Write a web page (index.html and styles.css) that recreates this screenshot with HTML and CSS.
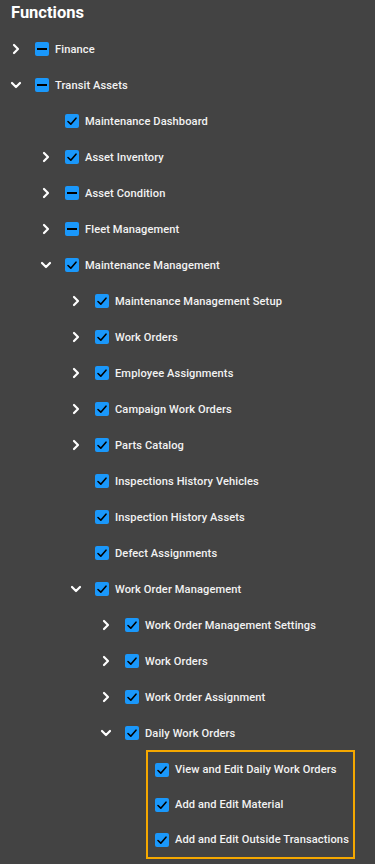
FILE: index.html
```html
<!doctype html>
<html lang="en-US">
	<head>
		<title>Functions</title>
		<meta charset="UTF-8">
		<meta name="viewport" content="width=device-width, initial-scale=1.0">
		<link rel="stylesheet" href="styles.css">
	</head>

	<body>
		<svg style="display: none;">
			<symbol id="chev-right" viewBox="0 0 12 12"><path d="M4 2 L8 6 L4 10" fill="none" stroke="#fff" stroke-width="2.2" stroke-linecap="round" stroke-linejoin="round"/></symbol>
			<symbol id="chev-down" viewBox="0 0 12 12"><path d="M2 4 L6 8 L10 4" fill="none" stroke="#fff" stroke-width="2.2" stroke-linecap="round" stroke-linejoin="round"/></symbol>
			<symbol id="tick" viewBox="0 0 14 14"><path d="M3 7.5 L5.8 10.2 L11 4.2" fill="none" stroke="#000" stroke-width="1.6" stroke-linecap="round" stroke-linejoin="round"/></symbol>
		</svg>

		<div class="panel">
			<h1>Functions</h1>

			<ul class="tree">
				<li>
					<div class="row"><svg class="toggle"><use href="#chev-right"/></svg><span class="box partial"></span><span class="label">Finance</span></div>
				</li>
				<li>
					<div class="row"><svg class="toggle"><use href="#chev-down"/></svg><span class="box partial"></span><span class="label">Transit Assets</span></div>
					<ul class="children">
						<li><div class="row"><span class="toggle"></span><span class="box"><svg><use href="#tick"/></svg></span><span class="label">Maintenance Dashboard</span></div></li>
						<li><div class="row"><svg class="toggle"><use href="#chev-right"/></svg><span class="box"><svg><use href="#tick"/></svg></span><span class="label">Asset Inventory</span></div></li>
						<li><div class="row"><svg class="toggle"><use href="#chev-right"/></svg><span class="box partial"></span><span class="label">Asset Condition</span></div></li>
						<li><div class="row"><svg class="toggle"><use href="#chev-right"/></svg><span class="box partial"></span><span class="label">Fleet Management</span></div></li>
						<li>
							<div class="row"><svg class="toggle"><use href="#chev-down"/></svg><span class="box"><svg><use href="#tick"/></svg></span><span class="label">Maintenance Management</span></div>
							<ul class="children">
								<li><div class="row"><svg class="toggle"><use href="#chev-right"/></svg><span class="box"><svg><use href="#tick"/></svg></span><span class="label">Maintenance Management Setup</span></div></li>
								<li><div class="row"><svg class="toggle"><use href="#chev-right"/></svg><span class="box"><svg><use href="#tick"/></svg></span><span class="label">Work Orders</span></div></li>
								<li><div class="row"><svg class="toggle"><use href="#chev-right"/></svg><span class="box"><svg><use href="#tick"/></svg></span><span class="label">Employee Assignments</span></div></li>
								<li><div class="row"><svg class="toggle"><use href="#chev-right"/></svg><span class="box"><svg><use href="#tick"/></svg></span><span class="label">Campaign Work Orders</span></div></li>
								<li><div class="row"><svg class="toggle"><use href="#chev-right"/></svg><span class="box"><svg><use href="#tick"/></svg></span><span class="label">Parts Catalog</span></div></li>
								<li><div class="row"><span class="toggle"></span><span class="box"><svg><use href="#tick"/></svg></span><span class="label">Inspections History Vehicles</span></div></li>
								<li><div class="row"><span class="toggle"></span><span class="box"><svg><use href="#tick"/></svg></span><span class="label">Inspection History Assets</span></div></li>
								<li><div class="row"><span class="toggle"></span><span class="box"><svg><use href="#tick"/></svg></span><span class="label">Defect Assignments</span></div></li>
								<li>
									<div class="row"><svg class="toggle"><use href="#chev-down"/></svg><span class="box"><svg><use href="#tick"/></svg></span><span class="label">Work Order Management</span></div>
									<ul class="children">
										<li><div class="row"><svg class="toggle"><use href="#chev-right"/></svg><span class="box"><svg><use href="#tick"/></svg></span><span class="label">Work Order Management Settings</span></div></li>
										<li><div class="row"><svg class="toggle"><use href="#chev-right"/></svg><span class="box"><svg><use href="#tick"/></svg></span><span class="label">Work Orders</span></div></li>
										<li><div class="row"><svg class="toggle"><use href="#chev-right"/></svg><span class="box"><svg><use href="#tick"/></svg></span><span class="label">Work Order Assignment</span></div></li>
										<li>
											<div class="row"><svg class="toggle"><use href="#chev-down"/></svg><span class="box"><svg><use href="#tick"/></svg></span><span class="label">Daily Work Orders</span></div>
											<ul class="children highlight">
												<li><div class="row"><span class="box"><svg><use href="#tick"/></svg></span><span class="label">View and Edit Daily Work Orders</span></div></li>
												<li><div class="row"><span class="box"><svg><use href="#tick"/></svg></span><span class="label">Add and Edit Material</span></div></li>
												<li><div class="row"><span class="box"><svg><use href="#tick"/></svg></span><span class="label">Add and Edit Outside Transactions</span></div></li>
											</ul>
										</li>
									</ul>
								</li>
							</ul>
						</li>
					</ul>
				</li>
			</ul>
		</div>
	</body>
</html>
```

FILE: styles.css
```css
* {
	padding: 0;
	margin: 0;
	box-sizing: border-box;
}

body {
	background: #434343;
	color: #f2f2f2;
	font-family: Roboto, "Liberation Sans", sans-serif;
	height: 864px;
	overflow: hidden;
}

.panel {
	padding-left: 10px;
}

h1 {
	font-size: 16.5px;
	font-weight: 700;
	line-height: 26px;
	margin-left: 1px;
	margin-bottom: 5px;
	color: #fff;
}

ul {
	list-style: none;
}

.children {
	padding-left: 30px;
}

.row {
	display: flex;
	align-items: center;
	height: 36px;
}

.toggle {
	width: 12px;
	height: 12px;
	margin-right: 13px;
	flex-shrink: 0;
}

.box {
	width: 14px;
	height: 14px;
	border-radius: 2px;
	background: #1a98fb;
	margin-right: 6px;
	flex-shrink: 0;
	position: relative;
	display: flex;
	align-items: center;
	justify-content: center;
}

.box svg {
	width: 14px;
	height: 14px;
}

.box.partial::after {
	content: "";
	width: 10px;
	height: 2px;
	background: #000;
}

.label {
	font-size: 11.1px;
	font-weight: 500;
	letter-spacing: 0.1px;
	white-space: nowrap;
}

.highlight {
	margin: -1px 20px 0 46px;
	padding: 0 0 0 7px;
	border: 2px solid #f5a800;
}

.highlight .row {
	height: 35px;
}
```
